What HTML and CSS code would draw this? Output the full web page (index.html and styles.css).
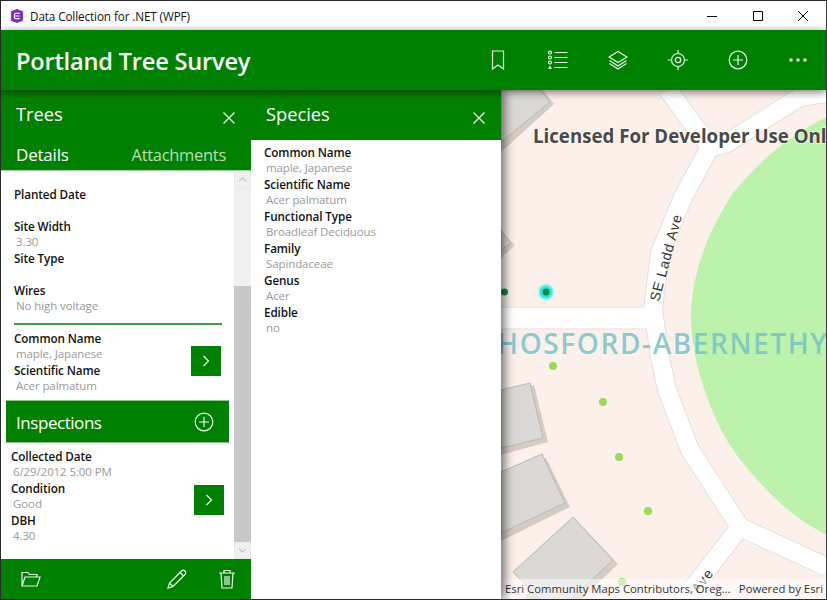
FILE: index.html
```html
<!DOCTYPE html>
<html lang="en">
<head>
<meta charset="utf-8">
<title>Data Collection for .NET (WPF)</title>
<link rel="stylesheet" href="styles.css">
</head>
<body>
<div class="window">
  <div class="titlebar">
    <svg class="app-icon" viewBox="0 0 16 16"><path d="M8 .5 14.500 3v10L8 15.500 1.500 13V3z" fill="#7b2fbf" stroke="#7b2fbf" stroke-linejoin="round"/><path d="M11 5H6.500A1.500 1.500 0 0 0 5 6.500v3A1.500 1.500 0 0 0 6.500 11H11M5 8h6" fill="none" stroke="#fff" stroke-width="1.200"/></svg>
    <span class="app-title">Data Collection for .NET (WPF)</span>
    <div class="win-controls">
      <button class="win-btn"><svg viewBox="0 0 10 10"><path d="M0 5.500h10" stroke="#000"/></svg></button>
      <button class="win-btn"><svg viewBox="0 0 10 10"><path d="M.5.500h9v9h-9z" fill="none" stroke="#000"/></svg></button>
      <button class="win-btn"><svg viewBox="0 0 10 10"><path d="M0 0l10 10M10 0L0 10" stroke="#000"/></svg></button>
    </div>
  </div>
  <header class="appbar">
    <h1 class="app-name">Portland Tree Survey</h1>
    <nav class="tools">
      <span class="tool"><svg viewBox="0 0 20 20"><path d="M4.500 1h11v18l-5.500-4-5.500 4z"/></svg></span>
      <span class="tool"><svg viewBox="0 0 20 20"><path d="M6.500 2.500h13M6.500 7.500h13M6.500 12.500h13M6.500 17.500h13"/><circle cx="2" cy="2.500" r="1.500"/><circle cx="2" cy="7.500" r="1.500"/><circle cx="2" cy="12.500" r="1.500"/><path class="fill" d="M2 15.500l2 3.500H0z"/></svg></span>
      <span class="tool"><svg viewBox="0 0 20 20"><path d="M10 1.500l9 5.500-9 5.500L1 7z"/><path d="M1.500 10.500l8.500 5.500 8.500-5.500M1.500 13.500l8.500 5.500 8.500-5.500"/></svg></span>
      <span class="tool"><svg viewBox="0 0 20 20"><circle cx="10" cy="10" r="6.500"/><circle cx="10" cy="10" r="2.700"/><path d="M10 0v3.500M10 16.500V20M0 10h3.500M16.500 10H20"/></svg></span>
      <span class="tool"><svg viewBox="0 0 20 20"><circle cx="10" cy="10" r="8.800"/><path d="M10 5v10M5 10h10"/></svg></span>
      <span class="tool"><svg viewBox="0 0 20 20"><circle class="fill" cx="3" cy="10" r="1.800"/><circle class="fill" cx="10" cy="10" r="1.800"/><circle class="fill" cx="17" cy="10" r="1.800"/></svg></span>
    </nav>
  </header>
  <main class="workspace">
    <section class="panel panel-trees">
      <div class="panel-head">
        <div class="panel-title-row">
          <h2 class="panel-title">Trees</h2>
          <svg class="close-icon" viewBox="0 0 12 12"><path d="M.5.500l11 11M11.500.500l-11 11"/></svg>
        </div>
        <div class="tabs"><span class="tab">Details</span><span class="tab tab-off">Attachments</span></div>
      </div>
      <div class="scroller">
        <div class="scroll-body">
          <div class="fields fields-top">
            <div class="label">Planted Date</div><div class="value"></div>
            <div class="label">Site Width</div><div class="value">3.30</div>
            <div class="label">Site Type</div><div class="value"></div>
            <div class="label">Wires</div><div class="value">No high voltage</div>
          </div>
          <div class="divider"></div>
          <div class="related related-a">
            <div class="fields">
              <div class="label">Common Name</div><div class="value">maple, Japanese</div>
              <div class="label">Scientific Name</div><div class="value">Acer palmatum</div>
            </div>
            <span class="go"><svg viewBox="0 0 8 12"><path d="M1.500 1l5 5-5 5"/></svg></span>
          </div>
          <div class="section-bar">
            <span class="section-name">Inspections</span>
            <svg class="section-add" viewBox="0 0 20 20"><circle cx="10" cy="10" r="8.800"/><path d="M10 5v10M5 10h10"/></svg>
          </div>
          <div class="related related-b">
            <div class="fields">
              <div class="label">Collected Date</div><div class="value">6/29/2012 5:00 PM</div>
              <div class="label">Condition</div><div class="value">Good</div>
              <div class="label">DBH</div><div class="value">4.30</div>
            </div>
            <span class="go"><svg viewBox="0 0 8 12"><path d="M1.500 1l5 5-5 5"/></svg></span>
          </div>
        </div>
        <div class="scrollbar">
          <span class="sb-btn"><svg viewBox="0 0 10 6"><path d="M1 5l4-4 4 4"/></svg></span>
          <span class="sb-track"></span>
          <span class="sb-thumb"></span>
          <span class="sb-btn"><svg viewBox="0 0 10 6"><path d="M1 1l4 4 4-4"/></svg></span>
        </div>
      </div>
      <div class="panel-foot">
        <svg class="foot-icon" viewBox="0 0 20 16"><path d="M1 15V1.500h6l1.500 2H16V6M1 15l3-9h15l-3 9z"/></svg>
        <span class="foot-gap"></span>
        <svg class="foot-icon" viewBox="0 0 20 20"><path d="M1 19l1.500-5L14.500 2a2 2 0 0 1 3.500 3.500L6 17.500zM2.500 14L6 17.500M13 3.500L16.500 7"/></svg>
        <svg class="foot-icon foot-trash" viewBox="0 0 18 20"><path d="M1 4h16M6 4V1.500h6V4M3 4l1 15h10l1-15M7 7v9M9 7v9M11 7v9"/></svg>
      </div>
    </section>
    <section class="panel panel-species">
      <div class="panel-title-row panel-head species-head">
        <h2 class="panel-title">Species</h2>
        <svg class="close-icon" viewBox="0 0 12 12"><path d="M.5.500l11 11M11.500.500l-11 11"/></svg>
      </div>
      <div class="fields species-fields">
        <div class="label">Common Name</div><div class="value">maple, Japanese</div>
        <div class="label">Scientific Name</div><div class="value">Acer palmatum</div>
        <div class="label">Functional Type</div><div class="value">Broadleaf Deciduous</div>
        <div class="label">Family</div><div class="value">Sapindaceae</div>
        <div class="label">Genus</div><div class="value">Acer</div>
        <div class="label">Edible</div><div class="value">no</div>
      </div>
    </section>
    <section class="map">
      <svg class="map-canvas" viewBox="501 90 325 509" preserveAspectRatio="xMinYMin slice">
        <path class="park" d="M827 117C790 135 760 160 733 193C712 225 691 270 691 317C691 365 715 430 743 463C765 490 790 517 827 535z"/>
        <g class="road-edge">
          <path d="M668 90L710 147L683 197L660 253L653 310L660 357L667 390L690 450L740 527L827 567M712 147L727 143L800 97L827 93M740 527L680 605"/>
          <path class="road-wide" d="M495 318H653"/>
        </g>
        <g class="road">
          <path d="M668 90L710 147L683 197L660 253L653 310L660 357L667 390L690 450L740 527L827 567M712 147L727 143L800 97L827 93M740 527L680 605"/>
          <path class="road-wide" d="M495 318H653"/>
        </g>
        <g class="shadows">
          <path d="M501 90H543L554 104L501 152z"/>
          <path d="M501 232L515 245L501 258z"/>
          <path d="M501 392L534 385L548 442L501 455z"/>
          <path d="M501 476L546 458L570 507L501 541z"/>
          <path d="M577 521L618 564L570 610H517z"/>
        </g>
        <g class="buildings">
          <path d="M501 90H540L550 102L501 142z"/>
          <path d="M501 230L511 243L501 250z"/>
          <path d="M501 390L530 383L543 438L501 448z"/>
          <path d="M501 472L542 454L565 503L501 533z"/>
          <path d="M573 517L613 560L565 605H545L513 572z"/>
        </g>
        <text class="license" x="533" y="143">Licensed For Developer Use Only</text>
        <text class="hood" x="497" y="354">HOSFORD-ABERNETHY</text>
        <text class="street" transform="translate(659 302) rotate(-75)">SE Ladd Ave</text>
        <text class="street" transform="translate(698 594) rotate(-52)">Ave</text>
        <circle class="glow" cx="546" cy="292" r="7"/>
        <circle class="tree-dark" cx="546" cy="292" r="3.500"/>
        <circle class="tree-dark" cx="504.500" cy="292" r="3.500"/>
        <circle class="tree" cx="553" cy="366" r="4"/>
        <circle class="tree" cx="603" cy="402" r="4"/>
        <circle class="tree" cx="619" cy="457" r="4"/>
        <circle class="tree" cx="648" cy="511" r="4"/>
        <circle class="tree" cx="622" cy="582" r="4"/>
      </svg>
      <div class="attribution"><span>Esri Community Maps Contributors, Oreg...</span><span>Powered by Esri</span></div>
    </section>
  </main>
</div>
</body>
</html>
```

FILE: styles.css
```css
* { box-sizing: border-box; }
html, body { margin: 0; height: 100%; overflow: hidden; background: #fff; }
body { font-family: "Open Sans", "Noto Sans", sans-serif; }
.window { width: 827px; height: 600px; border: 1px solid #2b2b2b; border-right-color: #3a3a3a; display: flex; flex-direction: column; overflow: hidden; }

.titlebar { height: 29px; flex: none; display: flex; align-items: center; background: #fff; }
.app-icon { width: 14px; height: 14px; margin-left: 9px; margin-right: 6px; }
.app-title { font-size: 11.700px; color: #111; letter-spacing: -.1px; }
.win-controls { margin-left: auto; display: flex; }
.win-btn { width: 45.500px; height: 29px; padding: 0; border: 0; background: none; display: flex; align-items: center; justify-content: center; }
.win-btn svg { width: 10px; height: 10px; display: block; }

.appbar { height: 60px; flex: none; background: #008000; color: #fff; display: flex; align-items: center; padding-left: 15px; position: relative; z-index: 3; box-shadow: 0 2px 8px rgba(0,0,0,.55); }
.app-name { margin: 2px 0 0; font-size: 23.600px; font-weight: 600; letter-spacing: -.2px; }
.tools { margin-left: auto; display: flex; margin-right: -2px; }
.tool { width: 60px; height: 60px; display: flex; align-items: center; justify-content: center; }
.tool svg { width: 20px; height: 20px; fill: none; stroke: #e6f3e6; stroke-width: 1.200; }
.tool .fill { fill: #e6f3e6; stroke: none; }

.workspace { flex: 1; display: flex; min-height: 0; position: relative; }
.panel { width: 250px; flex: none; display: flex; flex-direction: column; background: #fff; position: relative; }
.panel-trees { z-index: 2; }
.panel-species { z-index: 1; box-shadow: 3px 0 10px rgba(0,0,0,.6); }
.panel-head { background: #008000; color: #fff; flex: none; }
.panel-title-row { height: 50px; display: flex; align-items: center; justify-content: space-between; padding: 0 15px; }
.panel-title { margin: -4px 0 0; font-size: 18.300px; font-weight: 400; }
.close-icon { width: 12px; height: 12px; margin-top: 5px; margin-right: 1px; fill: none; stroke: #e8f4e8; stroke-width: 1.300; }
.tabs { height: 31px; display: flex; justify-content: space-between; padding: 0 25px 0 15px; border-bottom: 1px solid #a6d3a6; }
.tab { font-size: 17px; line-height: 30px; letter-spacing: -.2px; }
.tab-off { font-size: 16.500px; color: #b9deb9; letter-spacing: -.3px; }

.scroller { flex: 1; min-height: 0; display: flex; }
.scroll-body { flex: 1; min-width: 0; position: relative; }
.fields-top { padding: 15px 0 0 13px; }
.label { font-size: 11.700px; font-weight: 600; color: #111; height: 16px; line-height: 16px; letter-spacing: -.1px; }
.value { font-size: 11.500px; color: #999; height: 16px; line-height: 16px; padding-left: 2px; letter-spacing: -.1px; }
.divider { height: 2px; margin: 9px 12px 5px 13px; background: #3f9f3f; }
.related { display: flex; justify-content: space-between; }
.related-a { padding: 0 13px 0 13px; height: 64px; align-items: center; }
.related-a .go { margin-top: -2px; }
.related-b { padding: 5px 10px 0 10px; height: 101px; align-items: flex-start; }
.related-b .go { margin-top: 37px; }
.go { width: 30px; height: 30px; background: #008000; display: flex; align-items: center; justify-content: center; }
.go svg { width: 8px; height: 12px; fill: none; stroke: #e8f4e8; stroke-width: 1.200; }
.section-bar { margin: 6px 5px 0 5px; height: 43px; background: #008000; color: #fff; display: flex; align-items: center; justify-content: space-between; padding: 0 15px 0 10px; border: 1px solid #8cc48c; border-width: 1px 0; }
.section-name { font-size: 17px; letter-spacing: -.45px; margin-top: 2px; }
.section-add { width: 20px; height: 20px; fill: none; stroke: #e8f4e8; stroke-width: 1.200; }

.scrollbar { width: 17px; flex: none; display: flex; flex-direction: column; background: #f0f0f0; }
.sb-btn { height: 17px; flex: none; display: flex; align-items: center; justify-content: center; border: 1px solid #e9e9e9; background: #f0f0f0; }
.sb-btn svg { width: 9px; height: 5px; fill: none; stroke: #a8a8a8; stroke-width: 1.200; }
.sb-track { height: 98px; flex: none; }
.sb-thumb { flex: 1; background: #c8c8c8; }

.panel-foot { height: 40px; flex: none; background: #008000; display: flex; align-items: center; padding: 0 14px 0 20px; }
.foot-gap { flex: 1; }
.foot-icon { width: 20px; height: 20px; fill: none; stroke: #e8f4e8; stroke-width: 1.200; }
.foot-trash { margin-left: 30px; }

.species-head { height: 50px; }
.species-fields { padding: 4px 0 0 13px; }

.map { flex: 1; min-width: 0; position: relative; background: #fbf0ea; overflow: hidden; }
.map-canvas { display: block; width: 100%; height: 100%; }
.park { fill: #bdf2ac; }
.road-edge path { fill: none; stroke: #dcdad8; stroke-width: 19.500; stroke-linejoin: round; }
.road path { fill: none; stroke: #fff; stroke-width: 18; stroke-linejoin: round; }
.road-edge .road-wide { stroke-width: 22.500; }
.road .road-wide { stroke-width: 21; }
.shadows path { fill: #d5cdc3; }
.buildings path { fill: #dad9d5; stroke: #b9b8b4; stroke-width: 1; }
.license { font-family: "Open Sans", sans-serif; font-weight: 700; font-size: 18.700px; fill: #4a4a4a; stroke: #fff; stroke-width: 2px; stroke-opacity: .6; paint-order: stroke; }
.hood { font-family: "Open Sans", sans-serif; font-weight: 600; font-size: 28px; letter-spacing: 1.600px; fill: #6fbfc9; fill-opacity: .8; }
.street { font-family: "Liberation Sans", sans-serif; font-size: 14px; fill: #333; letter-spacing: .8px; }
.glow { fill: #19e8e8; filter: blur(1.200px); }
.tree-dark { fill: #0f8a45; }
.tree { fill: #9bd95c; }
.attribution { position: absolute; left: 0; right: 0; bottom: 0; height: 20px; background: rgba(255,255,255,.55); display: flex; justify-content: space-between; padding: 0 3px 0 4px; font-size: 11.300px; line-height: 19px; color: #333; }
```
